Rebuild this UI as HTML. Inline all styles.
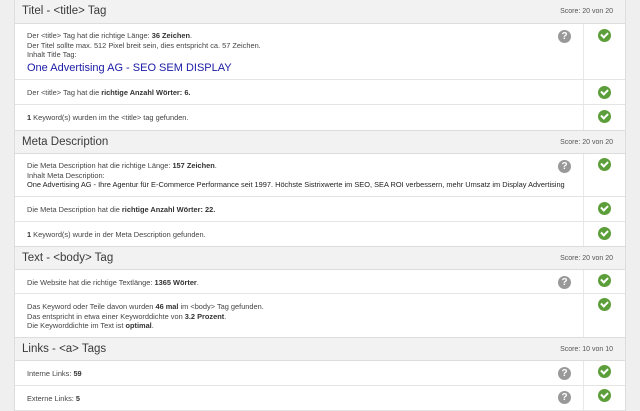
<!DOCTYPE html>
<html><head><meta charset="utf-8"><style>
*{margin:0;padding:0;box-sizing:border-box}
body{width:640px;height:400px;overflow:hidden;background:#efefef;font-family:"Liberation Sans",sans-serif;color:#444;position:relative}
.wrap{position:absolute;left:14px;width:612px;top:-1px;background:#fff;border-left:1px solid #ddd;border-right:1px solid #ddd}
.h{height:24px;background:#f2f2f2;border-top:1px solid #ddd;border-bottom:1px solid #ddd;position:relative}
.h .t{position:absolute;left:7px;top:5px;font-size:11.5px;color:#3a3a3a}
.h .s{position:absolute;right:12px;top:8px;font-size:7px;color:#555}
.r{position:relative;border-bottom:1px solid #e4e4e4}
.r .c{padding:0 60px 0 12px;font-size:7.4px;line-height:9.6px;color:#444}
.r:after{content:"";position:absolute;left:568px;top:0;bottom:0;border-left:1px solid #e8e8e8}
b{font-weight:bold;color:#333}
.ok{position:absolute;left:583px;width:13px;height:13px;border-radius:50%;background:#5c9e3a}
.ok:after{content:"";position:absolute;left:3.3px;top:2.6px;width:5px;height:3px;border-left:2px solid #fff;border-bottom:2px solid #fff;transform:rotate(-45deg)}
.q{position:absolute;left:543px;width:13px;height:13px;border-radius:50%;background:#999;color:#fff;font-size:10px;font-weight:bold;text-align:center;line-height:13px}
.big{font-size:11px;color:#1a1aa6;line-height:16px}
</style></head><body>
<div class="wrap">
<div class="h" style="height:25px"><span class="t">Titel - &lt;title&gt; Tag</span><span class="s">Score: 20 von 20</span></div>
<div class="r" style="height:56px"><div class="c" style="padding-top:7px">Der &lt;title&gt; Tag hat die richtige Länge: <b>36 Zeichen</b>.<br>Der Titel sollte max. 512 Pixel breit sein, dies entspricht ca. 57 Zeichen.<br>Inhalt Title Tag:<br><span class="big">One Advertising AG - SEO SEM DISPLAY</span></div><span class="q" style="top:6px">?</span><span class="ok" style="top:5px"></span></div>
<div class="r" style="height:25px"><div class="c" style="padding-top:8px">Der &lt;title&gt; Tag hat die <b>richtige Anzahl Wörter: 6.</b></div><span class="ok" style="top:6px"></span></div>
<div class="r" style="height:25px;border-bottom:0"><div class="c" style="padding-top:8px"><b>1</b> Keyword(s) wurden im the &lt;title&gt; tag gefunden.</div><span class="ok" style="top:5px"></span></div>
<div class="h"><span class="t">Meta Description</span><span class="s">Score: 20 von 20</span></div>
<div class="r" style="height:43px"><div class="c" style="padding-top:7px;padding-right:30px">Die Meta Description hat die richtige Länge: <b>157 Zeichen</b>.<br>Inhalt Meta Description:<br><span style="color:#222">One Advertising AG - Ihre Agentur für E-Commerce Performance seit 1997. Höchste Sistrixwerte im SEO, SEA ROI verbessern, mehr Umsatz im Display Advertising</span></div><span class="q" style="top:6px">?</span><span class="ok" style="top:4px"></span></div>
<div class="r" style="height:25px"><div class="c" style="padding-top:8px">Die Meta Description hat die <b>richtige Anzahl Wörter: 22.</b></div><span class="ok" style="top:5px"></span></div>
<div class="r" style="height:24px;border-bottom:0"><div class="c" style="padding-top:8px"><b>1</b> Keyword(s) wurde in der Meta Description gefunden.</div><span class="ok" style="top:5px"></span></div>
<div class="h"><span class="t">Text - &lt;body&gt; Tag</span><span class="s">Score: 20 von 20</span></div>
<div class="r" style="height:24px"><div class="c" style="padding-top:8px">Die Website hat die richtige Textlänge: <b>1365 Wörter</b>.</div><span class="q" style="top:6px">?</span><span class="ok" style="top:4px"></span></div>
<div class="r" style="height:43px;border-bottom:0"><div class="c" style="padding-top:8px">Das Keyword oder Teile davon wurden <b>46 mal</b> im &lt;body&gt; Tag gefunden.<br>Das entspricht in etwa einer Keyworddichte von <b>3.2 Prozent</b>.<br>Die Keyworddichte im Text ist <b>optimal</b>.</div><span class="ok" style="top:4px"></span></div>
<div class="h"><span class="t">Links - &lt;a&gt; Tags</span><span class="s">Score: 10 von 10</span></div>
<div class="r" style="height:25px"><div class="c" style="padding-top:8px">Interne Links: <b>59</b></div><span class="q" style="top:6px">?</span><span class="ok" style="top:4px"></span></div>
<div class="r" style="height:25px"><div class="c" style="padding-top:8px">Externe Links: <b>5</b></div><span class="q" style="top:5px">?</span><span class="ok" style="top:3px"></span></div>
</div>
</body></html>
